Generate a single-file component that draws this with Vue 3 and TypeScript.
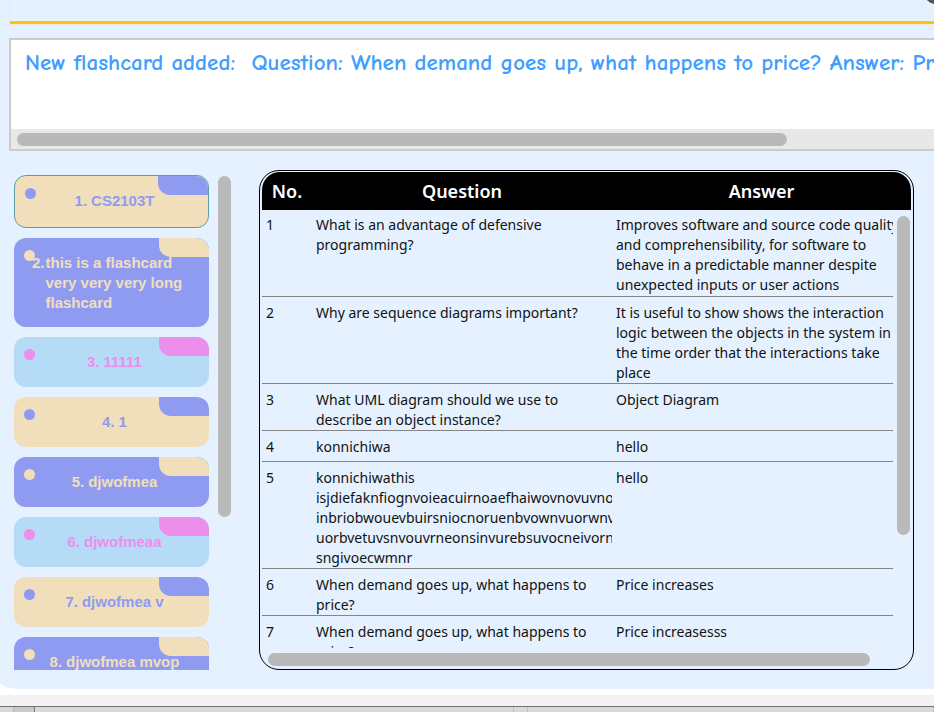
<script setup lang="ts">
import { ref } from 'vue'

type Tone = 'sand' | 'violet' | 'sky'

interface Deck {
  id: number
  name: string
  tone: Tone
}

interface Flashcard {
  id: number
  question: string
  answer: string
}

const message =
  'New flashcard added:  Question: When demand goes up, what happens to price? Answer: Price increases'

const selected = ref(1)

const decks: Deck[] = [
  { id: 1, name: 'CS2103T', tone: 'sand' },
  { id: 2, name: 'this is a flashcard\nvery very very long\nflashcard', tone: 'violet' },
  { id: 3, name: '11111', tone: 'sky' },
  { id: 4, name: '1', tone: 'sand' },
  { id: 5, name: 'djwofmea', tone: 'violet' },
  { id: 6, name: 'djwofmeaa', tone: 'sky' },
  { id: 7, name: 'djwofmea v', tone: 'sand' },
  { id: 8, name: 'djwofmea mvop', tone: 'violet' },
]

const flashcards: Flashcard[] = [
  {
    id: 1,
    question: 'What is an advantage of defensive\nprogramming?',
    answer:
      'Improves software and source code quality\nand comprehensibility, for software to\nbehave in a predictable manner despite\nunexpected inputs or user actions',
  },
  {
    id: 2,
    question: 'Why are sequence diagrams important?',
    answer:
      'It is useful to show shows the interaction\nlogic between the objects in the system in\nthe time order that the interactions take\nplace',
  },
  {
    id: 3,
    question: 'What UML diagram should we use to\ndescribe an object instance?',
    answer: 'Object Diagram',
  },
  { id: 4, question: 'konnichiwa', answer: 'hello' },
  {
    id: 5,
    question:
      'konnichiwathis\nisjdiefaknfiognvoieacuirnoaefhaiwovnovuvno\ninbriobwouevbuirsniocnoruenbvownvuorwnv\nuorbvetuvsnvouvrneonsinvurebsuvocneivorn\nsngivoecwmnr',
    answer: 'hello',
  },
  { id: 6, question: 'When demand goes up, what happens to\nprice?', answer: 'Price increases' },
  { id: 7, question: 'When demand goes up, what happens to\nprice?', answer: 'Price increasesss' },
]
</script>

<template>
  <div class="window">
    <main class="app">
      <div class="command"><span class="knob"></span></div>

      <section class="result">
        <textarea class="message" readonly wrap="off" aria-label="Result" :value="message"></textarea>
        <div class="track"><div class="thumb"></div></div>
      </section>

      <div class="content">
        <nav class="decks" aria-label="Decks">
          <button
            v-for="deck in decks"
            :key="deck.id"
            type="button"
            class="deck"
            :class="[deck.tone, { selected: deck.id === selected, long: deck.name.includes('\n') }]"
            @click="selected = deck.id"
          >
            <span class="dot"></span>
            <span class="tab"></span>
            <span class="label"><span>{{ deck.id }}.</span><span>{{ deck.name }}</span></span>
          </button>
        </nav>
        <div class="deck-scroll"><div class="thumb"></div></div>

        <section class="frame">
          <div class="viewport">
            <table>
              <colgroup>
                <col class="col-no" />
                <col class="col-question" />
                <col />
                <col class="col-gutter" />
              </colgroup>
              <thead>
                <tr>
                  <th>No.</th>
                  <th>Question</th>
                  <th colspan="2">Answer</th>
                </tr>
              </thead>
              <tbody>
                <tr v-for="card in flashcards" :key="card.id">
                  <td>{{ card.id }}</td>
                  <td>{{ card.question }}</td>
                  <td>{{ card.answer }}</td>
                </tr>
              </tbody>
            </table>
            <div class="bar-y"></div>
          </div>
          <div class="bar-x"><div class="thumb"></div></div>
        </section>
      </div>
    </main>

    <footer class="status"></footer>
    <div class="desktop"><span></span><span></span><span></span><span></span><span></span></div>
  </div>
</template>

<style>
body {
  overflow: hidden;
  background: #fff;
}
</style>

<style scoped>
* {
  box-sizing: border-box;
}

.window {
  display: flex;
  flex-direction: column;
  height: 100vh;
  overflow: hidden;
  font-family: 'Segoe UI', 'Noto Sans', sans-serif;
}

.app {
  flex: 1;
  min-height: 0;
  display: flex;
  flex-direction: column;
  margin-bottom: 6px;
  padding-bottom: 19px;
  background: #e5f1ff;
  border-bottom-left-radius: 20px 7px;
}

.command {
  position: relative;
  flex: none;
  height: 25px;
  margin-left: 9px;
  border-left: 1px solid #eee8dc;
  border-bottom: 1px solid #f3e7dc;
  box-shadow: inset 0 -3px #fbc40c;
}

.knob {
  position: absolute;
  top: -16px;
  right: -11px;
  width: 20px;
  height: 20px;
  border-radius: 50%;
  background: #555;
}

.result {
  flex: none;
  display: flex;
  flex-direction: column;
  height: 113px;
  margin: 13px 0 0 9px;
  border: 2px solid #cbcbcb;
  border-right: 0;
  background: #fff;
}

.message {
  flex: 1;
  min-height: 0;
  padding: 9px 0 0 14px;
  border: 0;
  outline: 0;
  resize: none;
  overflow: hidden;
  background: transparent;
  color: #409eff;
  font: bold 23px/28px 'Comic Sans MS', 'Comic Neue', 'Open Sans', sans-serif;
  white-space: pre;
}

.track {
  height: 20px;
  padding: 4px 0 3px 6px;
  background: #e8e8e8;
}

.thumb {
  border-radius: 7px;
  background: #b9b9b9;
}

.track .thumb {
  width: 84%;
  height: 13px;
}

.content {
  flex: 1;
  min-height: 0;
  display: flex;
  padding: 19px 20px 0 14px;
}

.decks {
  flex: none;
  display: flex;
  flex-direction: column;
  gap: 10px;
  width: 195px;
  margin-top: 5px;
  overflow: hidden;
}

.deck {
  position: relative;
  flex: none;
  padding: 15px 0;
  border: 0;
  border-radius: 12px;
  overflow: hidden;
  font: bold 15px/20px 'Liberation Sans', Arial, sans-serif;
  cursor: pointer;
}

.deck.long {
  padding-bottom: 14px;
}

.deck.selected {
  padding-bottom: 16px;
  border: 1px solid #5f9ea0;
}

.label {
  position: relative;
  display: flex;
  justify-content: center;
  gap: 4px;
  padding-left: 6px;
  white-space: pre;
  text-align: left;
}

.long .label {
  justify-content: flex-start;
  gap: 1px;
  padding-left: 18px;
}

.dot {
  position: absolute;
  top: 12px;
  left: 10px;
  width: 11px;
  height: 11px;
  border-radius: 50%;
}

.tab {
  position: absolute;
  top: 0;
  right: 0;
  width: 50px;
  height: 19px;
  border-radius: 0 12px 0 12px;
}

.sand {
  background: #f1dfbc;
  color: #8f9bf1;
}

.violet {
  background: #8f9bf1;
  color: #f1dfbc;
}

.sky {
  background: #b6dbf7;
  color: #ec8fec;
}

.dot,
.tab {
  background: currentColor;
}

.deck-scroll {
  flex: none;
  width: 13px;
  margin: 6px 28px 0 9px;
}

.deck-scroll .thumb {
  height: 69%;
}

.frame {
  flex: 1;
  min-width: 0;
  display: flex;
  flex-direction: column;
  padding: 1px 2px;
  border: 1px solid #000;
  border-radius: 20px;
}

.viewport {
  position: relative;
  flex: 1;
  min-height: 0;
  overflow: hidden;
  border-radius: 18px 18px 0 0;
}

table {
  width: 100%;
  table-layout: fixed;
  border-collapse: collapse;
}

.col-no {
  width: 50px;
}

.col-question {
  width: 300px;
}

.col-gutter {
  width: 18px;
}

th {
  height: 38px;
  padding: 0;
  background: #000;
  color: #fff;
  font-size: 18px;
  font-weight: 600;
  line-height: 24px;
}

td {
  height: 31px;
  padding: 6px 0 0 4px;
  border-bottom: 1px solid #858585;
  overflow: hidden;
  color: #111;
  font-size: 14px;
  line-height: 20px;
  vertical-align: top;
  white-space: pre;
}

tbody tr:first-child td {
  padding: 5px 0 1px 4px;
}

.bar-y {
  position: absolute;
  top: 44px;
  right: 1px;
  width: 13px;
  height: 67%;
  border-radius: 7px;
  background: #b9b9b9;
}

.bar-x {
  flex: none;
  padding: 5px 9px 2px 6px;
}

.bar-x .thumb {
  width: 95%;
  height: 13px;
}

.status {
  flex: none;
  height: 11px;
  background: #f3f3f3;
}

.desktop {
  flex: none;
  display: grid;
  grid-template-columns: 14px 21px 479px 14px 1fr;
  height: 6px;
  border-top: 1px solid #707070;
  background: #d9d9d9;
}

.desktop span {
  border-right: 1px solid #bdbdbd;
}

.desktop span:nth-child(2) {
  border-color: #777;
  background: #c9c9c9;
}
</style>
